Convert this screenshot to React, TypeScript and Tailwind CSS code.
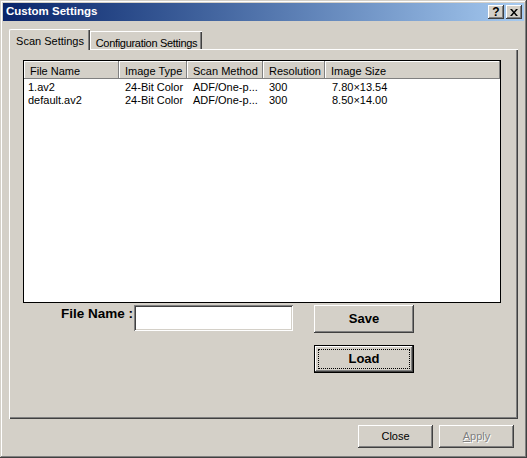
import React from "react";

const raised =
  "shadow-[inset_-1px_-1px_0_#404040,inset_1px_1px_0_#ffffff,inset_-2px_-2px_0_#808080,inset_2px_2px_0_#d4d0c8]";
const sunken =
  "shadow-[inset_1px_1px_0_#808080,inset_-1px_-1px_0_#ffffff,inset_2px_2px_0_#404040,inset_-2px_-2px_0_#d4d0c8]";

const columns = [
  { name: "File Name", w: "w-[95px]" },
  { name: "Image Type", w: "w-[68px]" },
  { name: "Scan Method", w: "w-[76px]" },
  { name: "Resolution", w: "w-[62px]" },
  { name: "Image Size", w: "flex-1" },
];

const rows = [
  ["1.av2", "24-Bit Color", "ADF/One-p...", "300", "7.80×13.54"],
  ["default.av2", "24-Bit Color", "ADF/One-p...", "300", "8.50×14.00"],
];

const CaptionButton = ({ children }: { children: React.ReactNode }) => (
  <div className={`w-[16px] h-[14px] bg-[#d4d0c8] ${raised} flex items-center justify-center`}>
    {children}
  </div>
);

const App = () => {
  return (
    <div className="w-[527px] h-[458px] bg-[#d4d0c8] [font-family:'Liberation_Sans',Arial,sans-serif] text-[11px] text-black">
      <div className="w-full h-full p-[3px] shadow-[inset_-1px_-1px_0_#404040,inset_1px_1px_0_#d4d0c8,inset_-2px_-2px_0_#808080,inset_2px_2px_0_#ffffff] flex flex-col">
        {/* title bar */}
        <div className="h-[18px] flex items-center justify-between pl-[3px] pr-[2px] bg-gradient-to-r from-[#0a246a] to-[#a6caf0]">
          <span className="text-white font-bold text-[11.5px] leading-none">Custom Settings</span>
          <div className="flex gap-[2px]">
            <CaptionButton>
              <span className="font-bold text-[12px] leading-none">?</span>
            </CaptionButton>
            <CaptionButton>
              <svg width="8" height="7" viewBox="0 0 8 7">
                <path d="M0 0h2l2 2.5L6 0h2L5 3.5 8 7H6L4 4.5 2 7H0l3-3.5z" fill="#000" />
              </svg>
            </CaptionButton>
          </div>
        </div>

        {/* tabs */}
        <div className="mt-[8px] px-[6px] flex items-end h-[20px]">
          <div className="relative z-10 w-[81px] h-[21px] mb-[-1px] bg-[#d4d0c8] border-l border-t border-white rounded-tl-[2px] shadow-[inset_-1px_0_0_#404040,inset_-2px_0_0_#808080] flex justify-center pt-[3px] whitespace-nowrap">
            Scan Settings
          </div>
          <div className="w-[112px] h-[18px] border-l border-t border-white shadow-[inset_-1px_0_0_#404040,inset_-2px_0_0_#808080] flex justify-center pt-[3px] whitespace-nowrap tracking-[-0.3px]">
            Configuration Settings
          </div>
        </div>

        {/* panel */}
        <div className="mx-[6px] h-[370px] border-l border-t border-white shadow-[inset_-1px_-1px_0_#404040,inset_-2px_-2px_0_#808080] pt-[10px] pl-[13px]">
          <div className="w-[478px] h-[243px] bg-white border border-black flex flex-col">
            <div className="h-[18px] flex bg-[#d4d0c8]">
              {columns.map((c) => (
                <div
                  key={c.name}
                  className={`${c.w} h-full pl-[6px] pt-[2px] flex items-center shadow-[inset_-1px_-1px_0_#808080,inset_1px_1px_0_#ffffff] whitespace-nowrap`}
                >
                  {c.name}
                </div>
              ))}
            </div>
            <div className="pt-[2px] leading-[13px]">
              {rows.map((r) => (
                <div key={r[0]} className="h-[13px] flex items-center whitespace-nowrap">
                  <div className="w-[95px] pl-[4px]">{r[0]}</div>
                  <div className="w-[68px] pl-[6px]">{r[1]}</div>
                  <div className="w-[76px] pl-[6px]">{r[2]}</div>
                  <div className="w-[62px] pl-[6px]">{r[3]}</div>
                  <div className="flex-1 pl-[7px]">{r[4]}</div>
                </div>
              ))}
            </div>
          </div>

          <div className="mt-[2px] flex">
            <div className="w-[77px] ml-[34px] pr-[1px] text-right font-bold text-[13.5px] leading-none pt-[2px] whitespace-nowrap">
              File Name :
            </div>
            <div className={`w-[159px] h-[26px] bg-white ${sunken}`} />
            <div className="ml-[21px] flex flex-col gap-[12px]">
              <button className={`w-[100px] h-[28px] bg-[#d4d0c8] ${raised} font-bold text-[13px]`}>
                Save
              </button>
              <button className="w-[100px] h-[28px] bg-[#d4d0c8] border border-black p-0">
                <div className={`w-full h-full ${raised} p-[3px]`}>
                  <div className="w-full h-full border border-dotted border-black flex items-center justify-center font-bold text-[13px]">
                    Load
                  </div>
                </div>
              </button>
            </div>
          </div>
        </div>

        {/* dialog buttons */}
        <div className="mt-[6px] pr-[10px] flex justify-end gap-[6px]">
          <button className={`w-[75px] h-[23px] bg-[#d4d0c8] ${raised} text-[11px]`}>Close</button>
          <button
            className={`w-[75px] h-[23px] bg-[#d4d0c8] ${raised} text-[11px] text-[#808080] [text-shadow:1px_1px_0_#ffffff]`}
          >
            <span className="underline">A</span>pply
          </button>
        </div>
      </div>
    </div>
  );
};

export default App;
